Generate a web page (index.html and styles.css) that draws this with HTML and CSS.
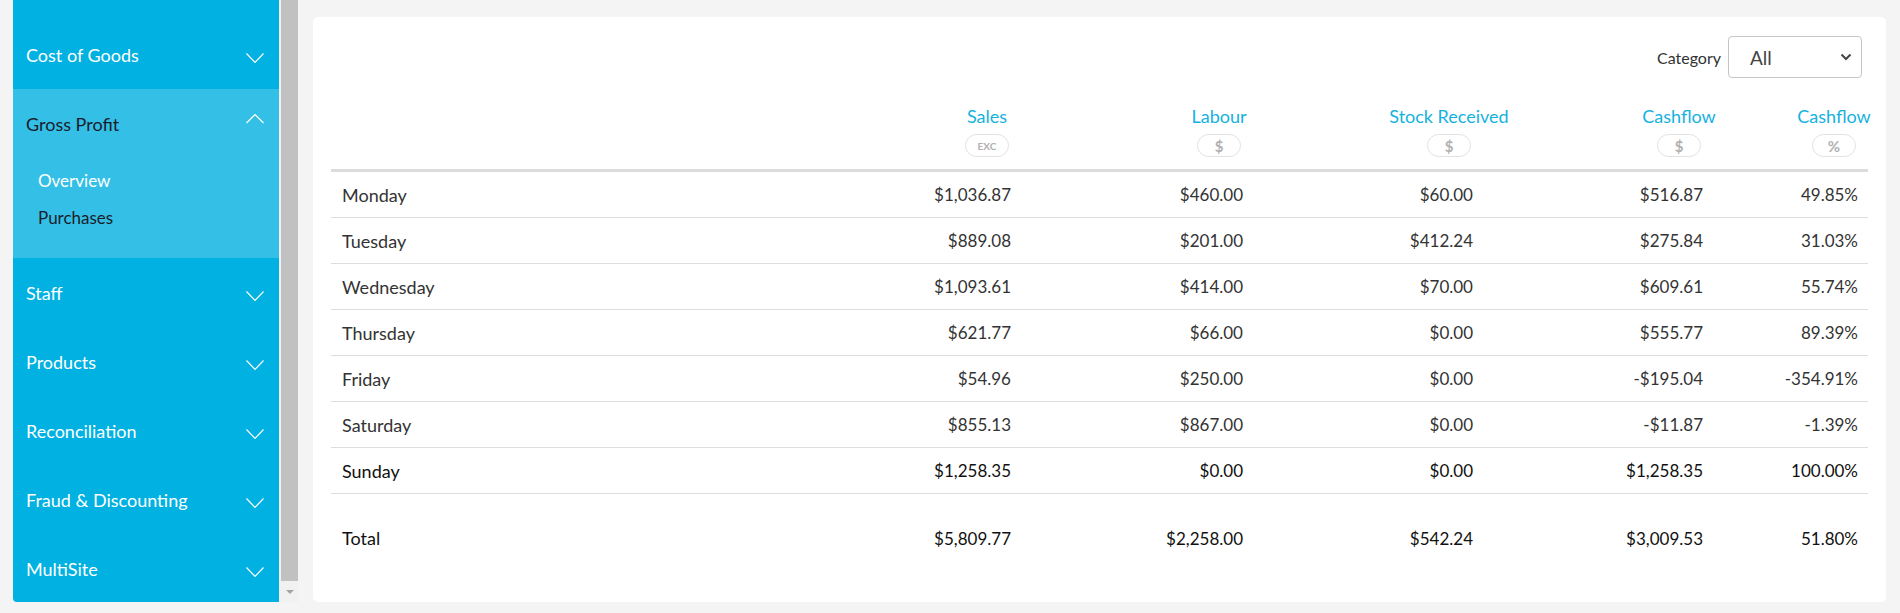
FILE: index.html
```html
<!DOCTYPE html>
<html lang="en">
  <head>
    <meta charset="UTF-8" />
    <meta name="viewport" content="width=device-width, initial-scale=1.0" />
    <title>Gross Profit - Overview</title>
    <link rel="stylesheet" href="styles.css">
  </head>
  <body>
    <div class="page">
      <!-- Side navigation (scrolled down a little) -->
      <aside class="sidebar-wrap">
        <nav class="sidebar">
          <div class="nav-item">
            <span>Cost of Goods</span>
            <svg class="chev" viewBox="0 0 18 20"><path d="M0.5 8.5 L9 17.5 L17.5 8.5" /></svg>
          </div>
          <div class="nav-group">
            <div class="nav-item current">
              <span>Gross Profit</span>
              <svg class="chev" viewBox="0 0 18 20"><path d="M0.5 9 L9 0.5 L17.5 9" /></svg>
            </div>
            <ul class="sub-nav">
              <li class="active">Overview</li>
              <li>Purchases</li>
            </ul>
          </div>
          <div class="nav-item">
            <span>Staff</span>
            <svg class="chev" viewBox="0 0 18 20"><path d="M0.5 8.5 L9 17.5 L17.5 8.5" /></svg>
          </div>
          <div class="nav-item">
            <span>Products</span>
            <svg class="chev" viewBox="0 0 18 20"><path d="M0.5 8.5 L9 17.5 L17.5 8.5" /></svg>
          </div>
          <div class="nav-item">
            <span>Reconciliation</span>
            <svg class="chev" viewBox="0 0 18 20"><path d="M0.5 8.5 L9 17.5 L17.5 8.5" /></svg>
          </div>
          <div class="nav-item">
            <span>Fraud &amp; Discounting</span>
            <svg class="chev" viewBox="0 0 18 20"><path d="M0.5 8.5 L9 17.5 L17.5 8.5" /></svg>
          </div>
          <div class="nav-item">
            <span>MultiSite</span>
            <svg class="chev" viewBox="0 0 18 20"><path d="M0.5 8.5 L9 17.5 L17.5 8.5" /></svg>
          </div>
        </nav>
        <div class="scrollbar">
          <div class="thumb"></div>
          <div class="arrow"></div>
        </div>
      </aside>

      <!-- Weekly overview -->
      <main class="card">
        <div class="toolbar">
          <span class="toolbar-label">Category</span>
          <div class="select">
            <span>All</span>
            <svg class="select-chev" viewBox="0 0 12 8"><path d="M1.5 1.5 L6 6 L10.5 1.5" /></svg>
          </div>
        </div>

        <div class="table">
          <div class="row row-head">
            <div></div>
            <div class="th"><div class="head"><span>Sales</span><span class="badge small">EXC</span></div></div>
            <div class="th"><div class="head"><span>Labour</span><span class="badge">$</span></div></div>
            <div class="th"><div class="head"><span>Stock Received</span><span class="badge">$</span></div></div>
            <div class="th"><div class="head"><span>Cashflow</span><span class="badge">$</span></div></div>
            <div class="th"><div class="head"><span>Cashflow</span><span class="badge">%</span></div></div>
          </div>

          <div class="row">
            <div class="day">Monday</div>
            <div class="num">$1,036.87</div>
            <div class="num">$460.00</div>
            <div class="num">$60.00</div>
            <div class="num">$516.87</div>
            <div class="num">49.85%</div>
          </div>
          <div class="row">
            <div class="day">Tuesday</div>
            <div class="num">$889.08</div>
            <div class="num">$201.00</div>
            <div class="num">$412.24</div>
            <div class="num">$275.84</div>
            <div class="num">31.03%</div>
          </div>
          <div class="row">
            <div class="day">Wednesday</div>
            <div class="num">$1,093.61</div>
            <div class="num">$414.00</div>
            <div class="num">$70.00</div>
            <div class="num">$609.61</div>
            <div class="num">55.74%</div>
          </div>
          <div class="row">
            <div class="day">Thursday</div>
            <div class="num">$621.77</div>
            <div class="num">$66.00</div>
            <div class="num">$0.00</div>
            <div class="num">$555.77</div>
            <div class="num">89.39%</div>
          </div>
          <div class="row">
            <div class="day">Friday</div>
            <div class="num">$54.96</div>
            <div class="num">$250.00</div>
            <div class="num">$0.00</div>
            <div class="num">-$195.04</div>
            <div class="num">-354.91%</div>
          </div>
          <div class="row">
            <div class="day">Saturday</div>
            <div class="num">$855.13</div>
            <div class="num">$867.00</div>
            <div class="num">$0.00</div>
            <div class="num">-$11.87</div>
            <div class="num">-1.39%</div>
          </div>
          <div class="row today">
            <div class="day">Sunday</div>
            <div class="num">$1,258.35</div>
            <div class="num">$0.00</div>
            <div class="num">$0.00</div>
            <div class="num">$1,258.35</div>
            <div class="num">100.00%</div>
          </div>

          <div class="row row-total">
            <div class="day">Total</div>
            <div class="num">$5,809.77</div>
            <div class="num">$2,258.00</div>
            <div class="num">$542.24</div>
            <div class="num">$3,009.53</div>
            <div class="num">51.80%</div>
          </div>
        </div>
      </main>
    </div>
  </body>
</html>
```

FILE: styles.css
```css
* {
  margin: 0;
  padding: 0;
  box-sizing: border-box;
}

html,
body {
  height: 100%;
}

body {
  background-color: #f4f4f4;
  font-family: 'Lato', 'Liberation Sans', sans-serif;
  color: #333;
  overflow: hidden;
}

.page {
  display: flex;
  align-items: flex-start;
  padding: 0 14px 0 13px;
}

/* Sidebar with its (fake) scrollbar */
.sidebar-wrap {
  display: flex;
  height: 602px;
  flex-shrink: 0;
}

.sidebar {
  width: 266px;
  height: 100%;
  overflow: hidden;
  padding-top: 20px;
  background-color: #00b1e1;
  border-bottom-left-radius: 4px;
}

.nav-item {
  height: 69px;
  display: flex;
  align-items: center;
  justify-content: space-between;
  padding: 0 15px 0 13px;
  font-size: 18px;
  color: #fff;
}

.chev {
  width: 18px;
  height: 20px;
  fill: none;
  stroke: #fff;
  stroke-width: 1.2;
}

.nav-group {
  background-color: #33bfe6;
}

.nav-item.current {
  color: #1b1d2b;
}

.sub-nav {
  list-style: none;
  padding: 4px 0 22px 25px;
}

.sub-nav li {
  height: 37px;
  line-height: 37px;
  font-size: 17px;
  color: #1b1d2b;
}

.sub-nav li.active {
  color: #fff;
}

.scrollbar {
  width: 19px;
  height: 100%;
  padding-left: 2px;
  background-color: #f1f1f1;
  display: flex;
  flex-direction: column;
}

.thumb {
  height: 581px;
  background-color: #c1c1c1;
}

.arrow {
  flex: 1;
  display: flex;
  justify-content: center;
  align-items: center;
}

.arrow::after {
  content: '';
  border-left: 4px solid transparent;
  border-right: 4px solid transparent;
  border-top: 4px solid #a3a3a3;
}

/* Main card */
.card {
  flex: 1;
  height: 585px;
  margin: 17px 0 0 15px;
  padding: 19px 18px 0 18px;
  background-color: #fff;
  border-radius: 5px;
}

.toolbar {
  display: flex;
  justify-content: flex-end;
  align-items: center;
  gap: 7px;
  padding-right: 6px;
}

.toolbar-label {
  font-size: 16px;
  color: #333;
}

.select {
  position: relative;
  width: 134px;
  height: 42px;
  padding-left: 21px;
  display: flex;
  align-items: center;
  border: 1px solid #c6c6c6;
  border-radius: 4px;
  font-size: 19px;
  color: #444;
}

.select-chev {
  position: absolute;
  right: 9px;
  top: 16px;
  width: 12px;
  height: 8px;
  fill: none;
  stroke: #444;
  stroke-width: 2;
}

/* Table */
.table {
  margin-top: 27px;
}

.row {
  display: grid;
  grid-template-columns: 1fr 228px 232px 230px 230px 155px;
  align-items: center;
  height: 46px;
  border-bottom: 1px solid #dedede;
}

.row-head {
  height: auto;
  align-items: end;
  padding-bottom: 12px;
  border-bottom: 3px solid #dcdcdc;
}

.th {
  display: flex;
  justify-content: flex-end;
  padding-right: 12px;
}

.head {
  width: 44px;
  display: flex;
  flex-direction: column;
  align-items: center;
  gap: 7px;
  font-size: 18px;
  line-height: 22px;
  color: #15b2df;
  white-space: nowrap;
}

.badge {
  width: 44px;
  height: 23px;
  display: flex;
  justify-content: center;
  align-items: center;
  border: 1px solid #e2e2e2;
  border-radius: 12px;
  font-size: 15px;
  font-weight: bold;
  color: #b0b0b0;
}

.badge.small {
  font-size: 10px;
}

.day {
  padding-left: 11px;
  font-size: 18px;
}

.num {
  text-align: right;
  padding-right: 10px;
  font-size: 17px;
}

.row.today,
.row-total {
  color: #111;
}

.row-total {
  height: 88px;
  border-bottom: none;
}
```
